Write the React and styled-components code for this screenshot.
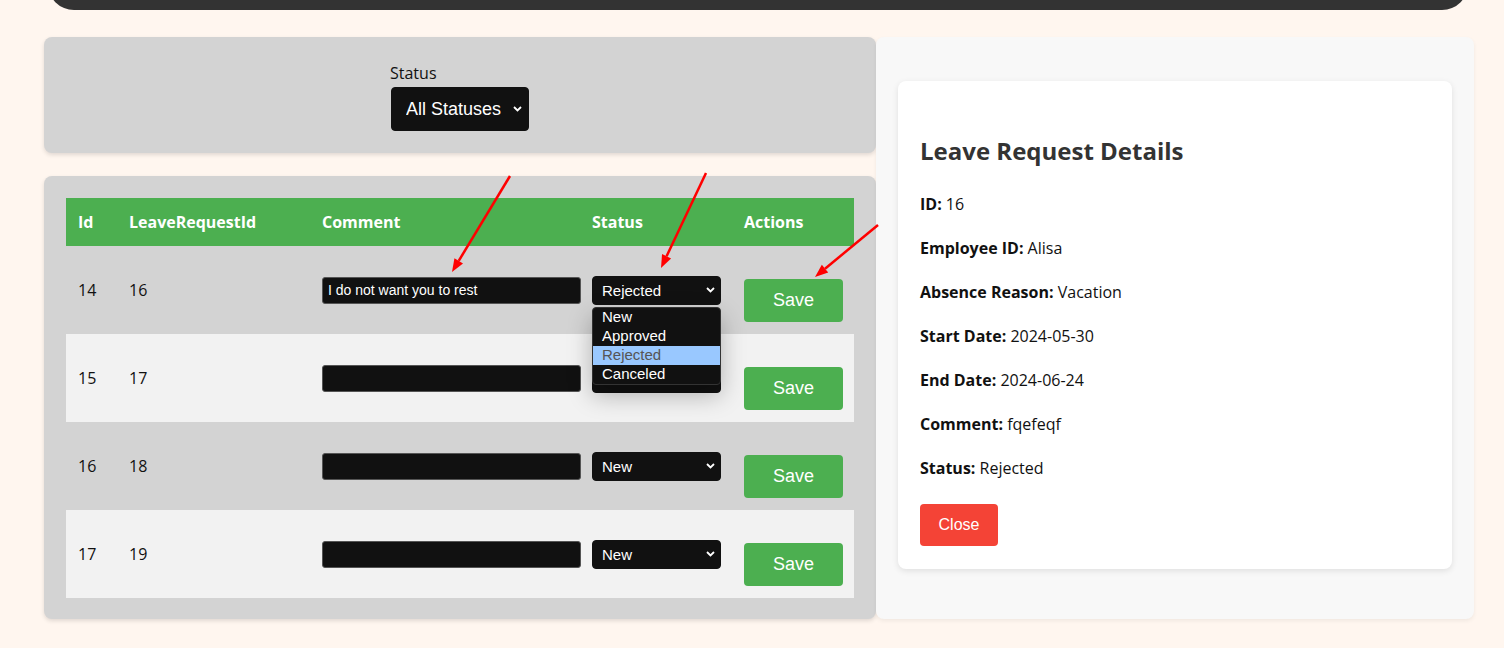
import React from 'react';
import styled, { createGlobalStyle } from 'styled-components';

const GlobalStyle = createGlobalStyle`
  body {
    margin: 0;
    background: #fff6ef;
    font-family: "Segoe UI", "Open Sans", "Noto Sans", sans-serif;
    color: #111;
  }
`;

const Page = styled.div`
  position: relative;
  width: 1504px;
  height: 648px;
  overflow: hidden;
`;

const TopBar = styled.div`
  height: 40px;
  margin: -30px 36px 0 48px;
  background: #333;
  border-radius: 0 0 26px 26px;
`;

const Main = styled.div`
  display: grid;
  grid-template-columns: 832px 598px;
  margin: 27px 0 0 44px;
`;

const LeftColumn = styled.div`
  display: flex;
  flex-direction: column;
  gap: 23px;
`;

const Panel = styled.div`
  background: #d3d3d3;
  border-radius: 8px;
  box-shadow: 0 2px 4px rgba(0, 0, 0, 0.12);
  padding: ${(p) => p.$pad};
`;

const FilterGroup = styled.div`
  display: flex;
  flex-direction: column;
  align-items: flex-start;
  width: 138px;
  margin: 0 auto;
`;

const Label = styled.label`
  font-size: 16px;
  line-height: 22px;
  margin: 1px 0 3px -1px;
  color: #111;
`;

const SelectWrap = styled.div`
  position: relative;
  width: ${(p) => p.$w}px;
`;

const Select = styled.select`
  display: block;
  appearance: none;
  width: 100%;
  height: ${(p) => p.$h}px;
  background: #111;
  color: #fff;
  border: 1px solid #111;
  border-radius: 4px;
  font-family: "Liberation Sans", Arial, sans-serif;
  font-size: ${(p) => p.$fs}px;
  padding: 0 0 0 ${(p) => p.$pl}px;
  outline: none;
`;

const Chevron = styled.svg`
  position: absolute;
  right: ${(p) => p.$r}px;
  top: 50%;
  transform: translateY(-50%);
  pointer-events: none;
`;

const Table = styled.table`
  width: 788px;
  border-collapse: collapse;
  table-layout: fixed;
`;

const Th = styled.th`
  background: #4caf50;
  color: #fff;
  text-align: left;
  font-weight: 700;
  font-size: 16px;
  height: 48px;
  padding: 0 12px;
  width: ${(p) => p.$w}px;
  box-sizing: border-box;
`;

const Tr = styled.tr`
  background: ${(p) => (p.$alt ? '#f2f2f2' : 'transparent')};
`;

const Td = styled.td`
  height: 88px;
  padding: 0 12px;
  font-size: 16px;
  color: #111;
  vertical-align: middle;
`;

const CommentInput = styled.input`
  display: block;
  box-sizing: border-box;
  width: 259px;
  height: 27px;
  background: #111;
  color: #fff;
  border: 1px solid #555;
  border-radius: 3px;
  font-family: "Liberation Sans", Arial, sans-serif;
  font-size: 14px;
  padding: 0 5px;
  outline: none;
`;

const Button = styled.button`
  display: block;
  background: ${(p) => p.$bg};
  color: #fff;
  border: none;
  border-radius: 4px;
  font-family: "Liberation Sans", Arial, sans-serif;
  font-size: ${(p) => p.$fs}px;
  width: ${(p) => p.$w}px;
  height: ${(p) => p.$h}px;
  margin-top: ${(p) => p.$mt || 0}px;
  cursor: pointer;
`;

const DropList = styled.ul`
  position: absolute;
  left: 0;
  top: 31px;
  width: 129px;
  margin: 0;
  padding: 0;
  list-style: none;
  background: #111;
  border: 1px solid #333;
  border-radius: 4px;
  box-sizing: border-box;
  box-shadow: 0 10px 24px rgba(0, 0, 0, 0.28);
  z-index: 5;
  overflow: hidden;
`;

const DropItem = styled.li`
  height: 19px;
  line-height: 18px;
  padding-left: 9px;
  font-family: "Liberation Sans", Arial, sans-serif;
  font-size: 15px;
  color: ${(p) => (p.$active ? '#555' : '#fff')};
  background: ${(p) => (p.$active ? '#99c8ff' : 'transparent')};
`;

const RightPanel = styled.div`
  background: #f8f8f8;
  border-radius: 8px;
  box-shadow: 0 2px 4px rgba(0, 0, 0, 0.06);
  padding: 44px 22px 50px;
`;

const Card = styled.div`
  background: #fff;
  border-radius: 8px;
  box-shadow: 0 2px 6px rgba(0, 0, 0, 0.1);
  padding: 22px 22px 23px;
`;

const Title = styled.h2`
  margin: 32px 0 15px;
  font-size: 24px;
  line-height: 32px;
  color: #333;
  font-weight: 700;
`;

const Detail = styled.p`
  margin: 0;
  padding: 10px 0;
  font-size: 16px;
  line-height: 24px;
  color: #111;

  b {
    font-weight: 700;
  }
`;

const Arrows = styled.svg`
  position: absolute;
  left: 0;
  top: 0;
  pointer-events: none;
  z-index: 10;
`;

const ChevronIcon = ({ r }) => (
  <Chevron $r={r} width="9" height="6" viewBox="0 0 9 6">
    <path d="M1 1 L4.5 4.5 L8 1" fill="none" stroke="#fff" strokeWidth="1.8" />
  </Chevron>
);

const rows = [
  { id: 14, lr: 16, comment: 'I do not want you to rest', status: 'Rejected', open: true },
  { id: 15, lr: 17, comment: '', status: 'Canceled' },
  { id: 16, lr: 18, comment: '', status: 'New' },
  { id: 17, lr: 19, comment: '', status: 'New' },
];

const statuses = ['New', 'Approved', 'Rejected', 'Canceled'];

const Arrow = ({ x1, y1, x2, y2 }) => {
  const a = Math.atan2(y2 - y1, x2 - x1);
  const len = 13;
  const w = 5;
  const bx = x2 - len * Math.cos(a);
  const by = y2 - len * Math.sin(a);
  const px = -Math.sin(a) * w;
  const py = Math.cos(a) * w;
  return (
    <g>
      <line x1={x1} y1={y1} x2={bx} y2={by} stroke="#f00" strokeWidth="2.5" />
      <polygon points={`${x2},${y2} ${bx + px},${by + py} ${bx - px},${by - py}`} fill="#f00" />
    </g>
  );
};

export default function App() {
  return (
    <Page>
      <GlobalStyle />
      <TopBar />
      <Main>
        <LeftColumn>
          <Panel $pad="24px 0 22px">
            <FilterGroup>
              <Label>Status</Label>
              <SelectWrap $w={138}>
                <Select $h={44} $fs={18} $pl={14} defaultValue="all">
                  <option value="all">All Statuses</option>
                  {statuses.map((s) => (
                    <option key={s}>{s}</option>
                  ))}
                </Select>
                <ChevronIcon r={7} />
              </SelectWrap>
            </FilterGroup>
          </Panel>
          <Panel $pad="22px 22px 21px">
            <Table>
              <thead>
                <tr>
                  <Th $w={51}>Id</Th>
                  <Th $w={193}>LeaveRequestId</Th>
                  <Th $w={270}>Comment</Th>
                  <Th $w={152}>Status</Th>
                  <Th $w={122}>Actions</Th>
                </tr>
              </thead>
              <tbody>
                {rows.map((r, i) => (
                  <Tr key={r.id} $alt={i % 2 === 1}>
                    <Td>{r.id}</Td>
                    <Td>{r.lr}</Td>
                    <Td>
                      <CommentInput defaultValue={r.comment} />
                    </Td>
                    <Td>
                      <SelectWrap $w={129}>
                        <Select $h={29} $fs={15} $pl={9} defaultValue={r.status}>
                          {statuses.map((s) => (
                            <option key={s}>{s}</option>
                          ))}
                        </Select>
                        <ChevronIcon r={6} />
                        {r.open && (
                          <DropList>
                            {statuses.map((s) => (
                              <DropItem key={s} $active={s === r.status}>
                                {s}
                              </DropItem>
                            ))}
                          </DropList>
                        )}
                      </SelectWrap>
                    </Td>
                    <Td>
                      <Button $bg="#4caf50" $fs={18} $w={99} $h={43} $mt={20}>
                        Save
                      </Button>
                    </Td>
                  </Tr>
                ))}
              </tbody>
            </Table>
          </Panel>
        </LeftColumn>
        <RightPanel>
          <Card>
            <Title>Leave Request Details</Title>
            <Detail><b>ID:</b> 16</Detail>
            <Detail><b>Employee ID:</b> Alisa</Detail>
            <Detail><b>Absence Reason:</b> Vacation</Detail>
            <Detail><b>Start Date:</b> 2024-05-30</Detail>
            <Detail><b>End Date:</b> 2024-06-24</Detail>
            <Detail><b>Comment:</b> fqefeqf</Detail>
            <Detail><b>Status:</b> Rejected</Detail>
            <Button $bg="#f44336" $fs={16} $w={78} $h={42} $mt={14}>
              Close
            </Button>
          </Card>
        </RightPanel>
      </Main>
      <Arrows width="1504" height="648">
        <Arrow x1={510} y1={176} x2={452} y2={272} />
        <Arrow x1={706} y1={173} x2={661} y2={268} />
        <Arrow x1={878} y1={225} x2={815} y2={277} />
      </Arrows>
    </Page>
  );
}
